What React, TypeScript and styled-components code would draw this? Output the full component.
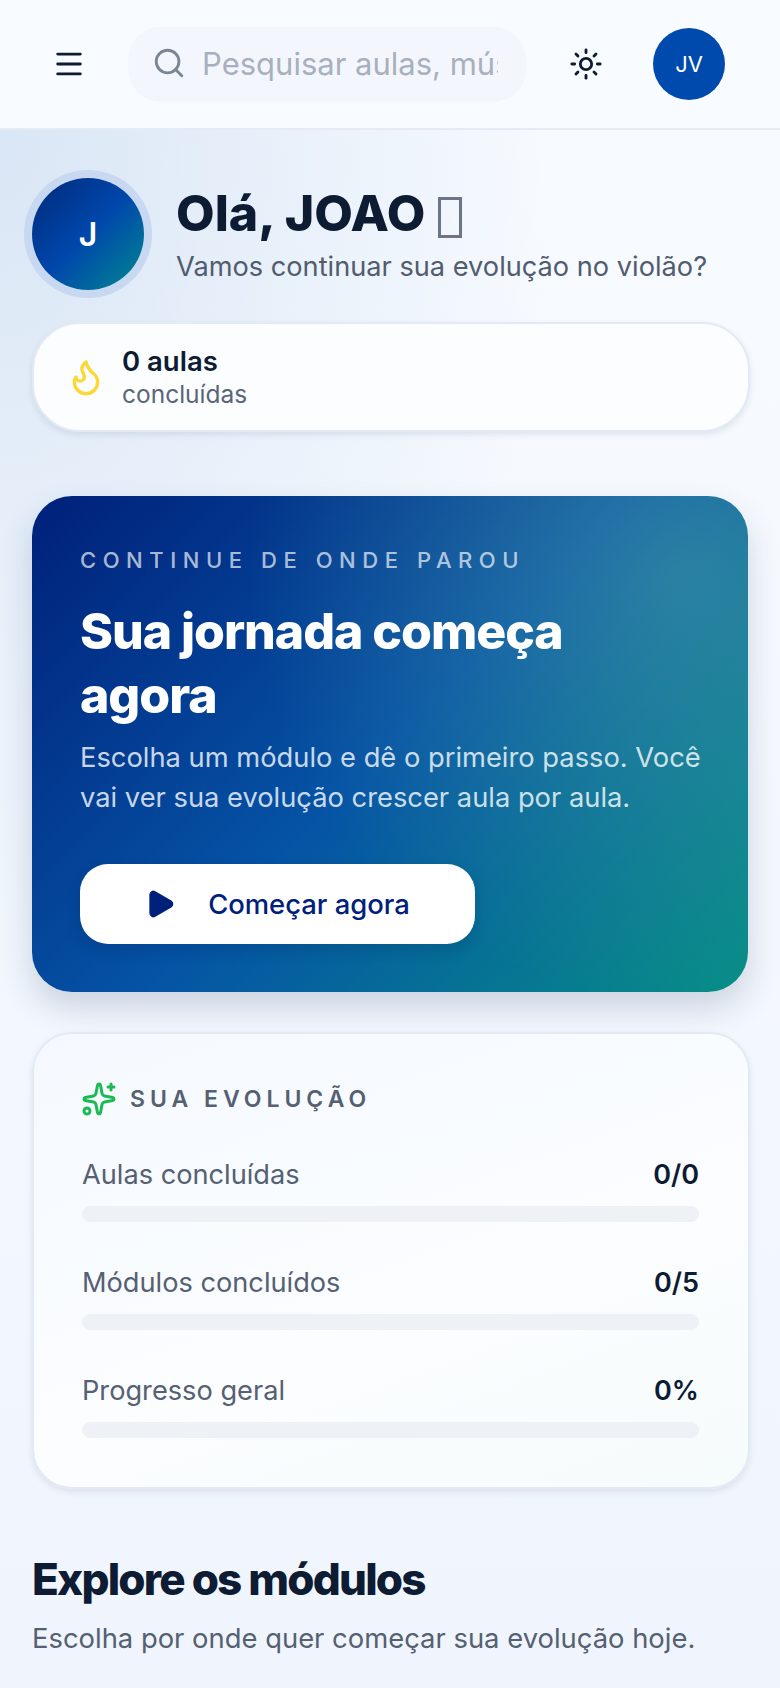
import styled, { createGlobalStyle } from "styled-components";
import { Flame, Menu, Play, Search, Sparkles, Sun } from "lucide-react";

const GlobalStyle = createGlobalStyle`
  * {
    box-sizing: border-box;
  }
  html, body {
    margin: 0;
    padding: 0;
    background: #f4f8fe;
  }
  body {
    font-family: "Inter", "Noto Sans", sans-serif;
    color: #0d1b33;
  }
`;

const Page = styled.div`
  width: 780px;
  height: 1688px;
  overflow: hidden;
  background:
    radial-gradient(ellipse 560px 900px at 0 130px, #d9e6f5 0%, rgba(217, 230, 245, 0) 100%),
    linear-gradient(180deg, #f8fbff 0%, #f0f5fd 100%);
`;

const Header = styled.header`
  height: 130px;
  display: flex;
  align-items: center;
  padding: 0 55px 0 52px;
  background: #f8fbff;
  border-bottom: 2px solid #e4ebf4;
`;

const IconButton = styled.div<{ $size: number }>`
  width: ${(p) => p.$size}px;
  height: ${(p) => p.$size}px;
  flex: none;
  color: #0d1b33;
  display: flex;
  align-items: center;
  justify-content: center;
`;

const SearchBox = styled.div`
  width: 396px;
  height: 73px;
  margin: -2px 44px 0 43px;
  flex: none;
  display: flex;
  align-items: center;
  gap: 16px;
  padding: 0 27px 0 23px;
  border-radius: 32px;
  background: #f3f7fd;
  box-shadow: 0 1px 3px rgba(30, 50, 90, 0.05);
  color: #7b8594;
`;

const Placeholder = styled.div`
  flex: 1;
  overflow: hidden;
  white-space: nowrap;
  font-size: 31px;
  color: #a8b0bd;
`;

const UserAvatar = styled.div`
  width: 72px;
  height: 72px;
  margin-left: auto;
  border-radius: 50%;
  background: #004aad;
  color: #ffffff;
  font-size: 22px;
  display: flex;
  align-items: center;
  justify-content: center;
`;

const Main = styled.main`
  padding: 48px 32px 0;
`;

const Greeting = styled.section`
  display: flex;
  align-items: center;
  gap: 32px;
  height: 112px;
  margin-bottom: 32px;
`;

const HeroAvatar = styled.div`
  width: 112px;
  height: 112px;
  flex: none;
  border-radius: 50%;
  background: linear-gradient(135deg, #00297a 0%, #0047ab 50%, #008a8f 100%);
  box-shadow: 0 0 0 8px #c8d8f0;
  color: #ffffff;
  font-size: 32px;
  font-weight: 600;
  display: flex;
  align-items: center;
  justify-content: center;
`;

const GreetingTitle = styled.h1`
  margin: 0 0 6px;
  font-size: 50px;
  line-height: 60px;
  font-weight: 800;
  letter-spacing: 0;
  color: #0d1b33;
`;

/* the reference shows an emoji that had no glyph: an empty box */
const MissingGlyph = styled.span`
  display: inline-block;
  width: 24px;
  height: 41px;
  margin-left: 13px;
  vertical-align: -7px;
  border: 3px solid #6b7488;
`;

const GreetingText = styled.p`
  margin: 0;
  font-size: 27.2px;
  line-height: 36px;
  color: #515c6e;
`;

const StreakCard = styled.section`
  height: 110px;
  margin: 0 -2px 64px 0;
  display: flex;
  align-items: center;
  gap: 16px;
  padding: 0 32px;
  border-radius: 48px;
  border: 2px solid #e3eaf3;
  background: #fbfdff;
  box-shadow: 0 3px 6px rgba(30, 50, 90, 0.1);
  color: #fdd835;
`;

const StreakTitle = styled.div`
  font-size: 27.5px;
  line-height: 34px;
  font-weight: 600;
  color: #0d1b33;
`;

const StreakLabel = styled.div`
  font-size: 24.5px;
  line-height: 32px;
  color: #5a6577;
`;

const HeroCard = styled.section`
  height: 496px;
  margin-bottom: 40px;
  padding: 50px 44px 48px 48px;
  border-radius: 40px;
  background:
    radial-gradient(circle 430px at 90% 15%, rgba(120, 200, 170, 0.32), rgba(120, 200, 170, 0)),
    linear-gradient(135deg, #00207a 0%, #0553a5 50%, #078e86 100%);
  box-shadow: 0 16px 32px rgba(30, 50, 90, 0.18);
  color: #ffffff;
`;

const HeroLabel = styled.div`
  font-size: 22px;
  line-height: 28px;
  font-weight: 500;
  letter-spacing: 6.55px;
  color: rgba(255, 255, 255, 0.68);
  margin-bottom: 25px;
`;

const HeroTitle = styled.h2`
  margin: 0 0 11px;
  width: 560px;
  font-size: 50px;
  line-height: 64px;
  font-weight: 800;
  letter-spacing: -1.05px;
`;

const HeroText = styled.p`
  margin: 0 0 46px;
  font-size: 27.3px;
  line-height: 40px;
  color: rgba(255, 255, 255, 0.8);
`;

const StartButton = styled.div`
  width: 395px;
  height: 80px;
  display: flex;
  align-items: center;
  justify-content: center;
  gap: 32px;
  padding-right: 1px;
  border-radius: 28px;
  background: #ffffff;
  box-shadow: 0 6px 14px rgba(0, 20, 60, 0.15);
  font-size: 27.4px;
  font-weight: 500;
  color: #00207a;
`;

const EvolutionCard = styled.section`
  height: 457px;
  margin: 0 -2px 0 0;
  padding: 47px 49px 0 48px;
  border-radius: 40px;
  border: 2px solid #e3eaf3;
  background: linear-gradient(160deg, #f5f9ff 0%, #fbfdff 60%, #f6fbfb 100%);
  box-shadow: 0 3px 6px rgba(30, 50, 90, 0.1);
`;

const EvolutionHeader = styled.div`
  display: flex;
  align-items: center;
  gap: 13px;
  height: 36px;
  margin-bottom: 39px;
  margin-left: -1px;
  color: #1db954;
`;

const EvolutionTitle = styled.h3`
  margin: 0;
  font-size: 23px;
  font-weight: 600;
  letter-spacing: 5px;
  color: #556072;
`;

const ProgressRow = styled.div`
  margin-bottom: 42px;
`;

const ProgressInfo = styled.div`
  display: flex;
  justify-content: space-between;
  align-items: center;
  height: 36px;
  margin-bottom: 14px;
`;

const ProgressLabel = styled.span`
  font-size: 27.2px;
  color: #556072;
`;

const ProgressValue = styled.span`
  font-size: 27px;
  font-weight: 600;
  color: #0d1b33;
`;

const ProgressTrack = styled.div`
  height: 16px;
  border-radius: 8px;
  background: #eef2f7;
  overflow: hidden;
`;

const ProgressFill = styled.div`
  height: 100%;
  background: #1db954;
`;

const ExploreTitle = styled.h2`
  margin: 62px 0 11px;
  font-size: 44px;
  line-height: 56px;
  font-weight: 800;
  letter-spacing: -1.8px;
  color: #0d1b33;
`;

const ExploreText = styled.p`
  margin: 0;
  font-size: 27.4px;
  line-height: 40px;
  color: #556072;
`;

const progress = [
  { label: "Aulas concluídas", value: "0/0", percent: 0 },
  { label: "Módulos concluídos", value: "0/5", percent: 0 },
  { label: "Progresso geral", value: "0%", percent: 0 },
];

const App = () => {
  return (
    <Page>
      <GlobalStyle />
      <Header>
        <IconButton $size={34}>
          <Menu size={34} strokeWidth={2} />
        </IconButton>
        <SearchBox>
          <Search size={34} strokeWidth={2} />
          <Placeholder>Pesquisar aulas, músicas...</Placeholder>
        </SearchBox>
        <IconButton $size={34}>
          <Sun size={34} strokeWidth={2} />
        </IconButton>
        <UserAvatar>JV</UserAvatar>
      </Header>
      <Main>
        <Greeting>
          <HeroAvatar>J</HeroAvatar>
          <div>
            <GreetingTitle>
              Olá, JOAO
              <MissingGlyph />
            </GreetingTitle>
            <GreetingText>Vamos continuar sua evolução no violão?</GreetingText>
          </div>
        </Greeting>
        <StreakCard>
          <Flame size={40} strokeWidth={2} />
          <div>
            <StreakTitle>0 aulas</StreakTitle>
            <StreakLabel>concluídas</StreakLabel>
          </div>
        </StreakCard>
        <HeroCard>
          <HeroLabel>CONTINUE DE ONDE PAROU</HeroLabel>
          <HeroTitle>Sua jornada começa agora</HeroTitle>
          <HeroText>
            Escolha um módulo e dê o primeiro passo. Você vai ver sua evolução crescer aula por aula.
          </HeroText>
          <StartButton>
            <Play size={32} fill="currentColor" strokeWidth={2} />
            Começar agora
          </StartButton>
        </HeroCard>
        <EvolutionCard>
          <EvolutionHeader>
            <Sparkles size={36} strokeWidth={2} />
            <EvolutionTitle>SUA EVOLUÇÃO</EvolutionTitle>
          </EvolutionHeader>
          {progress.map((item) => (
            <ProgressRow key={item.label}>
              <ProgressInfo>
                <ProgressLabel>{item.label}</ProgressLabel>
                <ProgressValue>{item.value}</ProgressValue>
              </ProgressInfo>
              <ProgressTrack>
                <ProgressFill style={{ width: `${item.percent}%` }} />
              </ProgressTrack>
            </ProgressRow>
          ))}
        </EvolutionCard>
        <ExploreTitle>Explore os módulos</ExploreTitle>
        <ExploreText>Escolha por onde quer começar sua evolução hoje.</ExploreText>
      </Main>
    </Page>
  );
};

export default App;
